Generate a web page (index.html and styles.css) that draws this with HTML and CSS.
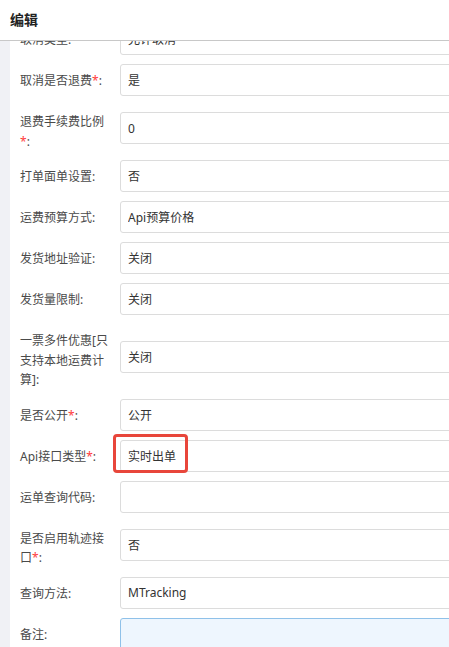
FILE: index.html
```html
<!DOCTYPE html>
<html lang="zh-CN">
<head>
    <meta charset="UTF-8">
    <meta name="viewport" content="width=device-width, initial-scale=1.0">
    <title>编辑</title>
    <link rel="stylesheet" href="styles.css">
</head>
<body>
    <div class="page">
        <header class="top-bar">编辑</header>

        <div class="main">
            <div class="side"></div>
            <div class="content">
                <form class="edit-form">
                    <div class="row">
                        <label>取消类型:</label>
                        <div class="field"><input type="text" value="允许取消"></div>
                    </div>
                    <div class="row">
                        <label>取消是否退费<span class="req">*</span>:</label>
                        <div class="field"><input type="text" value="是"></div>
                    </div>
                    <div class="row">
                        <label>退费手续费比例<span class="req">*</span>:</label>
                        <div class="field"><input type="text" value="0"></div>
                    </div>
                    <div class="row">
                        <label>打单面单设置:</label>
                        <div class="field"><input type="text" value="否"></div>
                    </div>
                    <div class="row">
                        <label>运费预算方式:</label>
                        <div class="field"><input type="text" value="Api预算价格"></div>
                    </div>
                    <div class="row">
                        <label>发货地址验证:</label>
                        <div class="field"><input type="text" value="关闭"></div>
                    </div>
                    <div class="row">
                        <label>发货量限制:</label>
                        <div class="field"><input type="text" value="关闭"></div>
                    </div>
                    <div class="row">
                        <label>一票多件优惠[只支持本地运费计算]:</label>
                        <div class="field"><input type="text" value="关闭"></div>
                    </div>
                    <div class="row">
                        <label>是否公开<span class="req">*</span>:</label>
                        <div class="field"><input type="text" value="公开"></div>
                    </div>
                    <div class="row">
                        <label>Api接口类型<span class="req">*</span>:</label>
                        <div class="field">
                            <input type="text" value="实时出单">
                            <!-- annotation box drawn over the field -->
                            <span class="mark"></span>
                        </div>
                    </div>
                    <div class="row">
                        <label>运单查询代码:</label>
                        <div class="field"><input type="text" value=""></div>
                    </div>
                    <div class="row">
                        <label>是否启用轨迹接口<span class="req">*</span>:</label>
                        <div class="field"><input type="text" value="否"></div>
                    </div>
                    <div class="row">
                        <label>查询方法:</label>
                        <div class="field"><input type="text" value="MTracking"></div>
                    </div>
                    <div class="row">
                        <label>备注:</label>
                        <div class="field"><textarea class="note"></textarea></div>
                    </div>
                </form>
            </div>
        </div>
    </div>
</body>
</html>
```

FILE: styles.css
```css
/* --- Base --- */
:root {
    --label-text: #4a4a4a;
    --value-text: #333;
    --border: #dcdcdc;
    --side-bg: #f0f1f5;
    --req: #ff3b3b;
    --mark: #e8463b;
}
* { margin: 0; padding: 0; box-sizing: border-box; }
body { font-family: 'Noto Sans', 'Noto Sans CJK SC', sans-serif; font-size: 12px; color: var(--value-text); background: #fff; }
.page { width: 449px; height: 647px; display: flex; flex-direction: column; overflow: hidden; }

/* --- Header --- */
.top-bar { height: 41px; flex-shrink: 0; padding-left: 10px; line-height: 40px; font-size: 14px; font-weight: 700; color: #222; border-bottom: 1px solid #c8c8c8; background: #fff; }

/* --- Body --- */
.main { flex: 1; display: flex; overflow: hidden; }
.side { width: 10px; flex-shrink: 0; background: var(--side-bg); }
.content { flex: 1; overflow: hidden; }
.edit-form { margin-top: -18px; margin-right: -8px; }

.row { display: flex; align-items: center; margin-bottom: 9px; }
.row label { width: 110px; flex-shrink: 0; align-self: flex-start; padding: 7px 10px 0; line-height: 19.5px; color: var(--label-text); }
.row .req { color: var(--req); }
.field { flex: 1; position: relative; }
.field input { display: block; width: 100%; height: 32px; padding: 0 7px; border: 1px solid var(--border); border-radius: 3px; font: inherit; color: var(--value-text); background: #fff; outline: none; }
.field .note { display: block; width: 100%; height: 80px; border: 1px solid #8fc1e9; border-radius: 3px; background: #eef6fe; resize: none; outline: none; }

.mark { position: absolute; left: -7px; top: -6px; width: 75px; height: 39px; border: 3px solid var(--mark); border-radius: 4px; }
```
